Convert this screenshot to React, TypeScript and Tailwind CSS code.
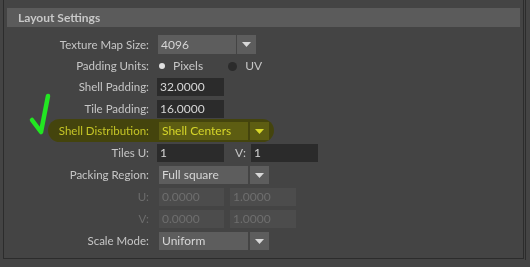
import React from "react";

const font = { fontFamily: "Lato, 'Noto Sans', sans-serif" };

function Arrow() {
  return (
    <svg width="9" height="5" viewBox="0 0 9 5">
      <polygon points="0,0 9,0 4.5,5" fill="#d8d8d8" />
    </svg>
  );
}

function Label({ children, dim }: { children: React.ReactNode; dim?: boolean }) {
  return (
    <div className={`w-[145px] shrink-0 text-right text-[11.5px] leading-none ${dim ? "text-[#6c6c6c]" : "text-[#c6c6c6]"}`}>
      {children}
    </div>
  );
}

function Dropdown({ value }: { value: string }) {
  return (
    <div className="flex ml-[10px] h-[18px]">
      <div className="w-[89px] h-full bg-[#5d5d5d] text-[#d6d6d6] text-[12px] pl-[3px] flex items-center">{value}</div>
      <div className="w-[19px] h-full ml-[2px] bg-[#5d5d5d] flex items-center justify-center">
        <Arrow />
      </div>
    </div>
  );
}

function Field({ value, w, ml, disabled }: { value: string; w: string; ml: string; disabled?: boolean }) {
  return (
    <div
      className={`${w} ${ml} h-[18px] text-[12px] pl-[3px] flex items-center ${
        disabled ? "bg-[#4c4c4c] text-[#6e6e6e]" : "bg-[#2b2b2b] text-[#d6d6d6]"
      }`}
    >
      {value}
    </div>
  );
}

export default function App() {
  return (
    <div className="w-[530px] h-[267px] bg-[#444444] relative overflow-hidden" style={font}>
      <div className="ml-[3px] w-[521px] h-[259px] border-l border-r border-b border-[#2c2c2c] flex flex-col">
        <div className="ml-[3px] mt-[8px] w-[513px] h-[19px] bg-[#5b5b5b] flex items-center pl-[11px] text-[12px] font-bold text-[#c8c8c8]">
          Layout Settings
        </div>

        <div className="mt-[8px] flex flex-col">
          {/* Texture Map Size */}
          <div className="flex items-center h-[19px]">
            <Label>Texture Map Size:</Label>
            <div className="flex ml-[9px] h-[19px]">
              <div className="w-[78px] h-full bg-[#5d5d5d] text-[#d6d6d6] text-[12px] pl-[3px] flex items-center">4096</div>
              <div className="w-[19px] h-full ml-[1px] bg-[#5d5d5d] flex items-center justify-center">
                <Arrow />
              </div>
            </div>
          </div>

          {/* Padding Units */}
          <div className="flex items-center h-[18px] mt-[3px]">
            <Label>Padding Units:</Label>
            <div className="ml-[10px] w-[6px] h-[6px] rounded-full bg-[#e0e0e0]" />
            <div className="ml-[8px] text-[12px] text-[#c6c6c6]">Pixels</div>
            <div className="ml-[25px] w-[9px] h-[9px] rounded-full bg-[#2b2b2b]" />
            <div className="ml-[8px] text-[12px] text-[#c6c6c6]">UV</div>
          </div>

          <div className="flex flex-col gap-[4px] mt-[3px]">
            <div className="flex items-center h-[18px]">
              <Label>Shell Padding:</Label>
              <Field value="32.0000" w="w-[67px]" ml="ml-[8px]" />
            </div>
            <div className="flex items-center h-[18px]">
              <Label>Tile Padding:</Label>
              <Field value="16.0000" w="w-[67px]" ml="ml-[8px]" />
            </div>
            <div className="flex items-center h-[18px]">
              <Label>Shell Distribution:</Label>
              <Dropdown value="Shell Centers" />
            </div>
            <div className="flex items-center h-[18px]">
              <Label>Tiles U:</Label>
              <Field value="1" w="w-[67px]" ml="ml-[8px]" />
              <div className="ml-[11px] w-[16px] text-[12px] text-[#c6c6c6]">V:</div>
              <Field value="1" w="w-[67px]" ml="ml-[0px]" />
            </div>
            <div className="flex items-center h-[18px]">
              <Label>Packing Region:</Label>
              <Dropdown value="Full square" />
            </div>
            <div className="flex items-center h-[18px]">
              <Label dim>U:</Label>
              <Field value="0.0000" w="w-[65px]" ml="ml-[10px]" disabled />
              <Field value="1.0000" w="w-[66px]" ml="ml-[6px]" disabled />
            </div>
            <div className="flex items-center h-[18px]">
              <Label dim>V:</Label>
              <Field value="0.0000" w="w-[65px]" ml="ml-[10px]" disabled />
              <Field value="1.0000" w="w-[66px]" ml="ml-[6px]" disabled />
            </div>
            <div className="flex items-center h-[18px]">
              <Label>Scale Mode:</Label>
              <Dropdown value="Uniform" />
            </div>
          </div>
        </div>
      </div>
      <div className="absolute left-[525px] top-0 w-px h-[260px] bg-[#2c2c2c]" />

      {/* highlighter */}
      <div className="absolute left-[48px] top-[119px] w-[226px] h-[23px] rounded-[12px] bg-[#ffff30] mix-blend-multiply" />

      {/* green check */}
      <svg className="absolute left-0 top-0" width="530" height="267" viewBox="0 0 530 267">
        <polyline
          points="32,120 41,132 48,96"
          fill="none"
          stroke="#22e622"
          strokeWidth="4.5"
          strokeLinecap="round"
          strokeLinejoin="round"
        />
      </svg>
    </div>
  );
}
